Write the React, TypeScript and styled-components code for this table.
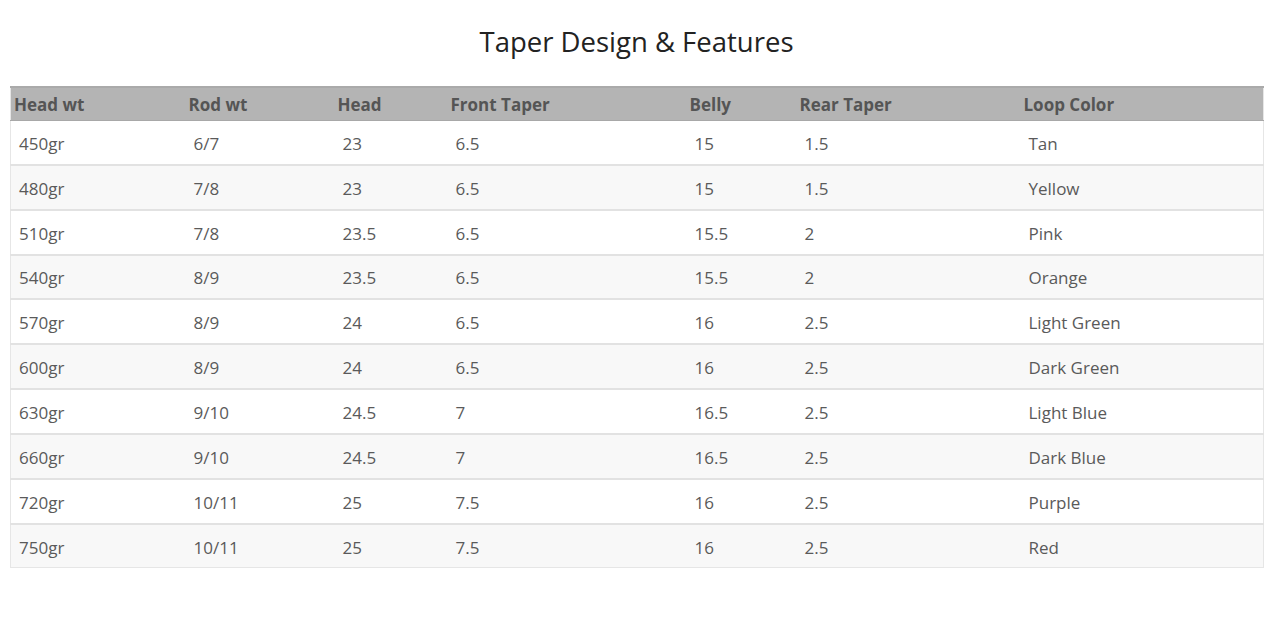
import styled, { createGlobalStyle } from 'styled-components'

const rows = [
  ['450gr', '6/7', '23', '6.5', '15', '1.5', 'Tan'],
  ['480gr', '7/8', '23', '6.5', '15', '1.5', 'Yellow'],
  ['510gr', '7/8', '23.5', '6.5', '15.5', '2', 'Pink'],
  ['540gr', '8/9', '23.5', '6.5', '15.5', '2', 'Orange'],
  ['570gr', '8/9', '24', '6.5', '16', '2.5', 'Light Green'],
  ['600gr', '8/9', '24', '6.5', '16', '2.5', 'Dark Green'],
  ['630gr', '9/10', '24.5', '7', '16.5', '2.5', 'Light Blue'],
  ['660gr', '9/10', '24.5', '7', '16.5', '2.5', 'Dark Blue'],
  ['720gr', '10/11', '25', '7.5', '16', '2.5', 'Purple'],
  ['750gr', '10/11', '25', '7.5', '16', '2.5', 'Red'],
]

const headings = ['Head wt', 'Rod wt', 'Head', 'Front Taper', 'Belly', 'Rear Taper', 'Loop Color']
const colWidths = [175, 149, 113, 239, 110, 224, 243]

const GlobalStyle = createGlobalStyle`
  body {
    margin: 0;
    background: #fff;
    font-family: "Open Sans", "DejaVu Sans", sans-serif;
  }
`

const App = () => (
  <>
    <GlobalStyle />
    <Page>
      <Title>Taper Design &amp; Features</Title>
      <Table>
        <colgroup>
          {colWidths.map((w, i) => <col key={i} style={{ width: w }} />)}
        </colgroup>
        <thead>
          <tr>
            {headings.map(h => <HeadCell key={h}>{h}</HeadCell>)}
          </tr>
        </thead>
        <tbody>
          {rows.map((r, i) => (
            <Row key={r[0]} $striped={i % 2 === 1}>
              {r.map((c, j) => <Cell key={j}>{c}</Cell>)}
            </Row>
          ))}
        </tbody>
      </Table>
    </Page>
  </>
)

const Page = styled.div`
  padding: 0 17px 0 10px;
`

const Title = styled.h2`
  margin: 0;
  padding: 22px 0 24px;
  text-align: center;
  font-size: 27.5px;
  font-weight: 400;
  line-height: 40px;
  color: #222;
`

const Table = styled.table`
  width: 100%;
  table-layout: fixed;
  border-collapse: collapse;
  border: 1px solid #e6e6e6;
  border-top: none;
`

const HeadCell = styled.th`
  height: 32px;
  padding: 0 3px;
  text-align: left;
  background: #b4b4b4;
  border-top: 2px solid #aaa;
  border-bottom: 1px solid #a8a8a8;
  color: #555;
  font-size: 17px;
  font-weight: 700;
`

const Row = styled.tr<{ $striped: boolean }>`
  background: ${p => (p.$striped ? '#f8f8f8' : '#fff')};
  border-bottom: 2px solid #e2e2e2;

  &:last-child {
    border-bottom: 1px solid #e6e6e6;
  }
`

const Cell = styled.td`
  height: 40.85px;
  padding: 2px 7px 0 8px;
  color: #5a5a5a;
  font-size: 17px;
  font-weight: 400;
`

export default App
